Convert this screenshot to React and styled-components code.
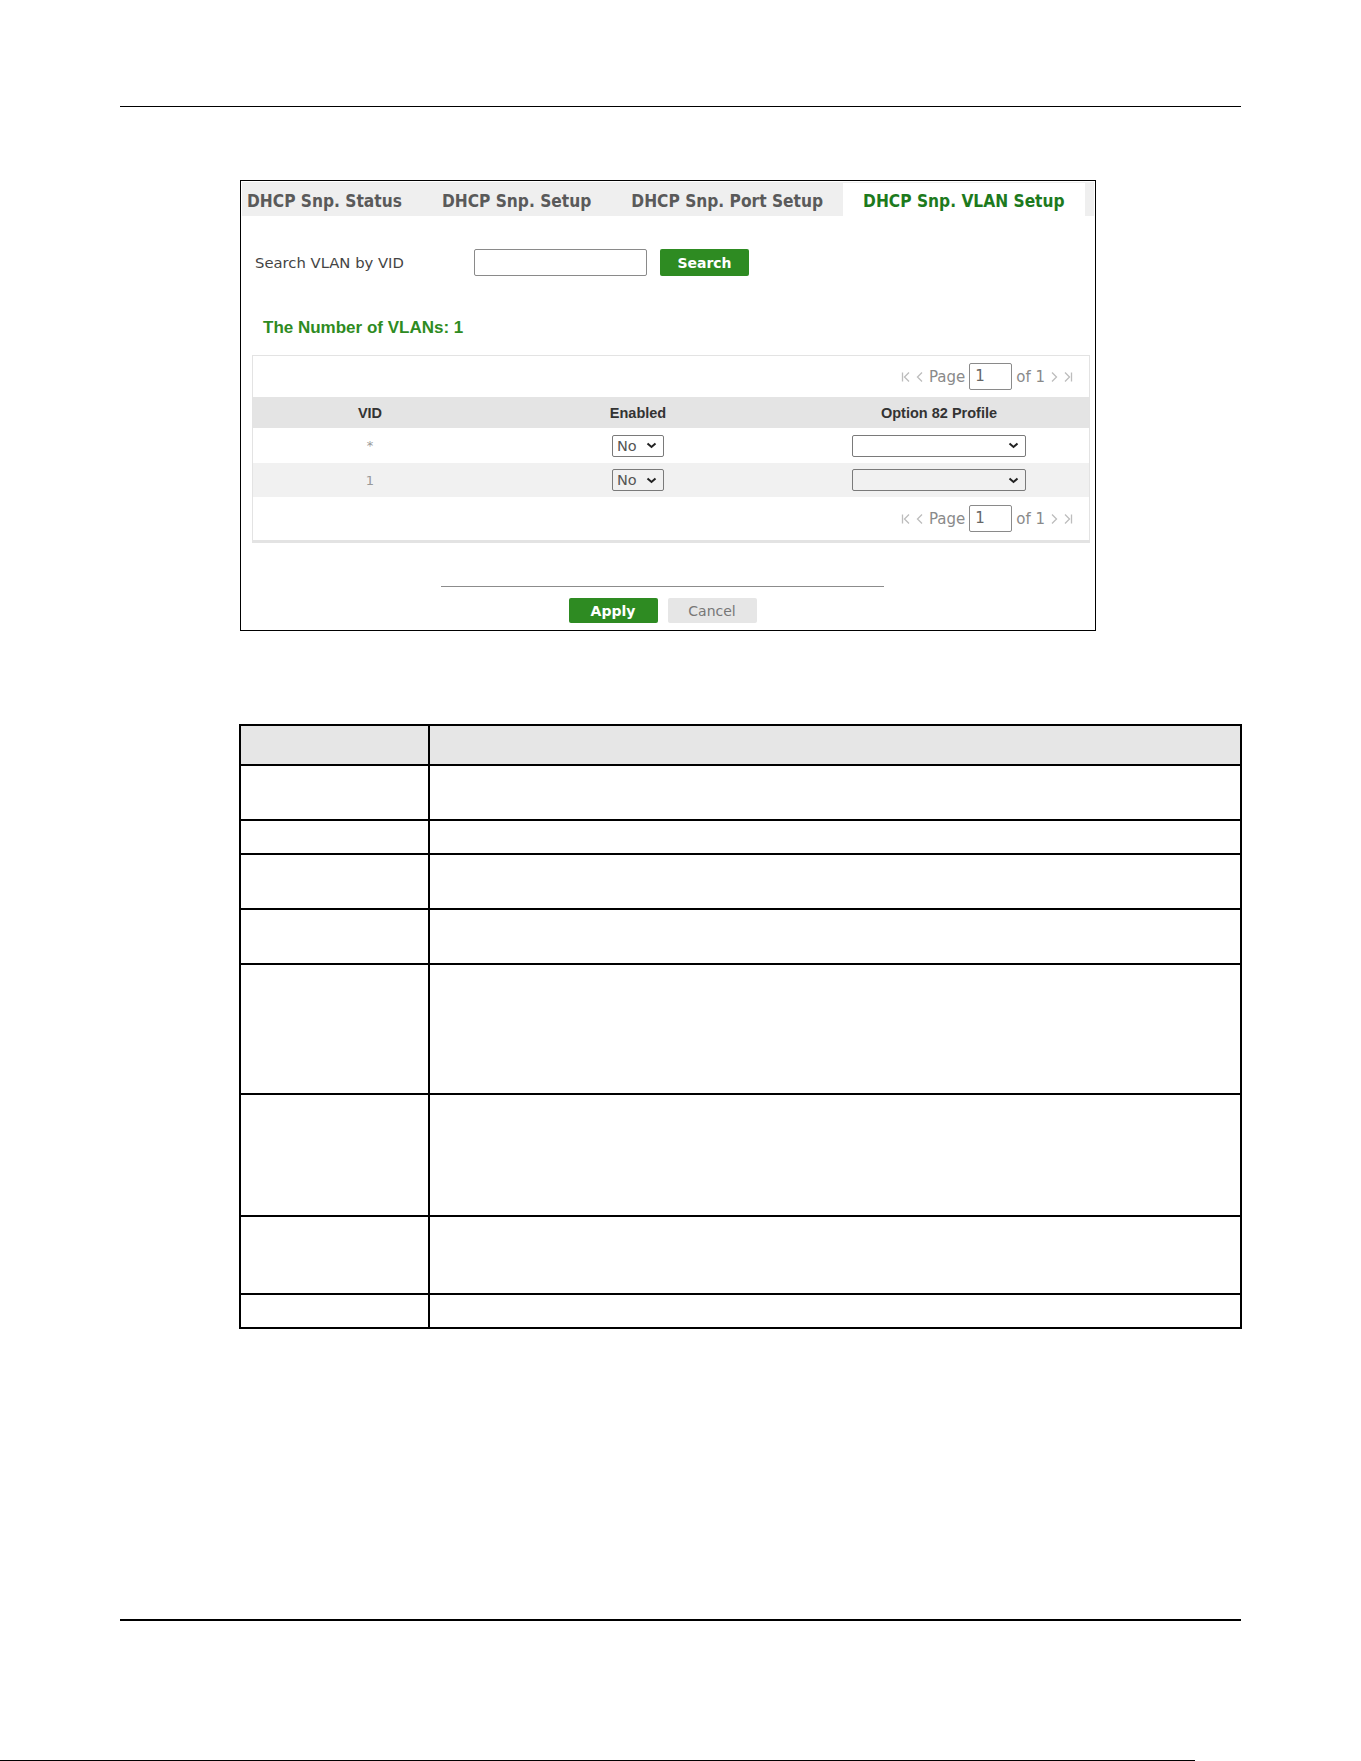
import React from 'react';
import styled, { createGlobalStyle } from 'styled-components';

const GlobalStyle = createGlobalStyle`
  html, body {
    margin: 0;
    padding: 0;
    background: #fff;
  }

  body {
    font-family: 'DejaVu Sans', 'Liberation Sans', sans-serif;
  }
`;

const green = '#2e8b22';

const Page = styled.div`
  width: 1361px;
  height: 1761px;
  display: flex;
  flex-direction: column;
  box-sizing: border-box;
`;

const Rule = styled.div`
  margin: ${ props => props.top }px 0 0 120px;
  width: 1121px;
  border-top: ${ props => props.thick ? 2 : 1.5 }px solid #000;
`;

const EdgeLine = styled.div`
  margin-top: auto;
  width: 1195px;
  border-bottom: 1px solid #000;
`;

const Panel = styled.div`
  margin: 73px 0 0 240px;
  width: 856px;
  height: 451px;
  box-sizing: border-box;
  border: 1px solid #000;
  display: flex;
  flex-direction: column;
  overflow: hidden;
`;

const TabBar = styled.div`
  display: flex;
  align-items: stretch;
  height: 34px;
  margin: 1px 1px 0;
  background: #efefef;
  overflow: hidden;
`;

const Tab = styled.div`
  display: flex;
  align-items: center;
  padding: ${ props => props.first ? '2px 20px 0 5px' : '2px 20px 0' };
  margin-top: 1px;
  font-family: 'DejaVu Sans Condensed', 'DejaVu Sans', sans-serif;
  font-weight: bold;
  font-size: 17.2px;
  color: ${ props => props.active ? '#1d7a1d' : '#5a5a5a' };
  background: ${ props => props.active ? '#fff' : 'transparent' };
  white-space: nowrap;
`;

const SearchRow = styled.div`
  display: flex;
  align-items: center;
  margin: 33px 0 0 14px;
  height: 27px;
`;

const Label = styled.div`
  width: 219px;
  font-size: 14.8px;
  color: #444;
`;

const TextInput = styled.div`
  width: 173px;
  height: 27px;
  box-sizing: border-box;
  border: 1px solid #8a8a8a;
  border-radius: 2px;
`;

const Button = styled.div`
  width: 89px;
  height: ${ props => props.small ? 25 : 27 }px;
  margin-left: ${ props => props.gap || 0 }px;
  box-sizing: border-box;
  display: flex;
  align-items: center;
  justify-content: center;
  border-radius: 2px;
  font-size: 14px;
  font-weight: ${ props => props.muted ? 'normal' : 'bold' };
  background: ${ props => props.muted ? '#e6e6e6' : green };
  color: ${ props => props.muted ? '#777' : '#fff' };
`;

const Title = styled.div`
  margin: 42px 0 0 22px;
  font-family: 'Liberation Sans', Arial, sans-serif;
  font-size: 17px;
  font-weight: bold;
  color: ${ green };
`;

const ListBox = styled.div`
  margin: 17px 5px 0 11px;
  border: 1px solid #e3e3e3;
  border-bottom-width: 3px;
  display: flex;
  flex-direction: column;
`;

const Pager = styled.div`
  height: ${ props => props.h }px;
  display: flex;
  align-items: center;
  justify-content: flex-end;
  padding-right: 16px;
  gap: 4px;
  font-size: 15px;
  color: #8a8a8a;
`;

const PageInput = styled.div`
  width: 43px;
  height: 27px;
  box-sizing: border-box;
  border: 1px solid #8a8a8a;
  border-radius: 2px;
  padding-left: 5px;
  line-height: 25px;
  color: #666;
`;

const Row = styled.div`
  display: grid;
  grid-template-columns: 234px 302px 1fr;
  align-items: center;
  height: ${ props => props.h }px;
  background: ${ props => props.shade || '#fff' };
`;

const Cell = styled.div`
  display: flex;
  justify-content: center;
  align-items: center;
  font-family: ${ props => props.head ? "'Liberation Sans', Arial, sans-serif" : 'inherit' };
  font-size: ${ props => props.head ? 14.5 : 13 }px;
  font-weight: ${ props => props.head ? 'bold' : 'normal' };
  color: ${ props => props.head ? '#333' : '#999' };
`;

const Select = styled.div`
  width: ${ props => props.w }px;
  height: 22px;
  box-sizing: border-box;
  border: 1px solid #7a7a7a;
  border-radius: 2px;
  display: flex;
  align-items: center;
  justify-content: space-between;
  padding: 0 6px 0 4px;
  font-size: 14.5px;
  color: #555;
`;

const Footer = styled.div`
  margin: 43px 11px 0 0;
  display: flex;
  flex-direction: column;
  align-items: center;
`;

const Divider = styled.div`
  width: 443px;
  border-top: 1px solid #8c8c8c;
  margin-bottom: 11px;
`;

const ButtonRow = styled.div`
  display: flex;
`;

const DescTable = styled.div`
  margin: 93px 0 0 239px;
  width: 1003px;
  box-sizing: border-box;
  border: 2px solid #000;
  display: flex;
  flex-direction: column;
`;

const DescRow = styled.div`
  display: grid;
  grid-template-columns: 189px 1fr;
  box-sizing: border-box;
  height: ${ props => props.h }px;
  background: ${ props => props.head ? '#e6e6e6' : '#fff' };
  border-bottom: ${ props => props.last ? 'none' : '2px solid #000' };
`;

const DescCell = styled.div`
  border-right: ${ props => props.last ? 'none' : '2px solid #000' };
`;

function Chevron() {
  return (
    <svg width="11" height="7" viewBox="0 0 11 7">
      <polyline points="1.5,1.5 5.5,5 9.5,1.5" fill="none" stroke="#222" strokeWidth="2" />
    </svg>
  );
}

function PagerIcon({ dir, edge }) {
  const flip = dir === 'right' ? 'scale(-1,1) translate(-10,0)' : undefined;

  return (
    <svg width="10" height="12" viewBox="0 0 10 12">
      <g transform={flip} stroke="#bdbdbd" strokeWidth="1.3" fill="none">
        { edge && <line x1="1.5" y1="1.5" x2="1.5" y2="10.5" /> }
        <polyline points={ edge ? '8,1.5 3.5,6 8,10.5' : '7,1.5 2.5,6 7,10.5' } />
      </g>
    </svg>
  );
}

function Pagination({ h }) {
  return (
    <Pager h={h}>
      <PagerIcon dir="left" edge />
      <PagerIcon dir="left" />
      <span>Page</span>
      <PageInput>1</PageInput>
      <span>of 1</span>
      <PagerIcon dir="right" />
      <PagerIcon dir="right" edge />
    </Pager>
  );
}

const vlanRows = [
  { vid: '*', shade: '#fff' },
  { vid: '1', shade: '#f1f1f1' },
];

const descRows = [40, 55, 34, 55, 55, 130, 122, 78, 32];

function App() {
  return (
    <Page>
      <GlobalStyle />
      <Rule top={106} />

      <Panel>
        <TabBar>
          <Tab first>DHCP Snp. Status</Tab>
          <Tab>DHCP Snp. Setup</Tab>
          <Tab>DHCP Snp. Port Setup</Tab>
          <Tab active>DHCP Snp. VLAN Setup</Tab>
        </TabBar>

        <SearchRow>
          <Label>Search VLAN by VID</Label>
          <TextInput />
          <Button gap={13}>Search</Button>
        </SearchRow>

        <Title>The Number of VLANs: 1</Title>

        <ListBox>
          <Pagination h={41} />
          <Row h={31} shade="#e4e4e4">
            <Cell head>VID</Cell>
            <Cell head>Enabled</Cell>
            <Cell head>Option 82 Profile</Cell>
          </Row>
          { vlanRows.map(row => (
            <Row key={row.vid} h={row.vid === '*' ? 35 : 34} shade={row.shade}>
              <Cell>{ row.vid }</Cell>
              <Cell>
                <Select w={52}>No <Chevron /></Select>
              </Cell>
              <Cell>
                <Select w={174}><span /> <Chevron /></Select>
              </Cell>
            </Row>
          )) }
          <Pagination h={43} />
        </ListBox>

        <Footer>
          <Divider />
          <ButtonRow>
            <Button small>Apply</Button>
            <Button small muted gap={10}>Cancel</Button>
          </ButtonRow>
        </Footer>
      </Panel>

      <DescTable>
        { descRows.map((h, i) => (
          <DescRow key={i} h={h} head={i === 0} last={i === descRows.length - 1}>
            <DescCell />
            <DescCell last />
          </DescRow>
        )) }
      </DescTable>

      <Rule top={290} thick />
      <EdgeLine />
    </Page>
  );
}

export default App;
